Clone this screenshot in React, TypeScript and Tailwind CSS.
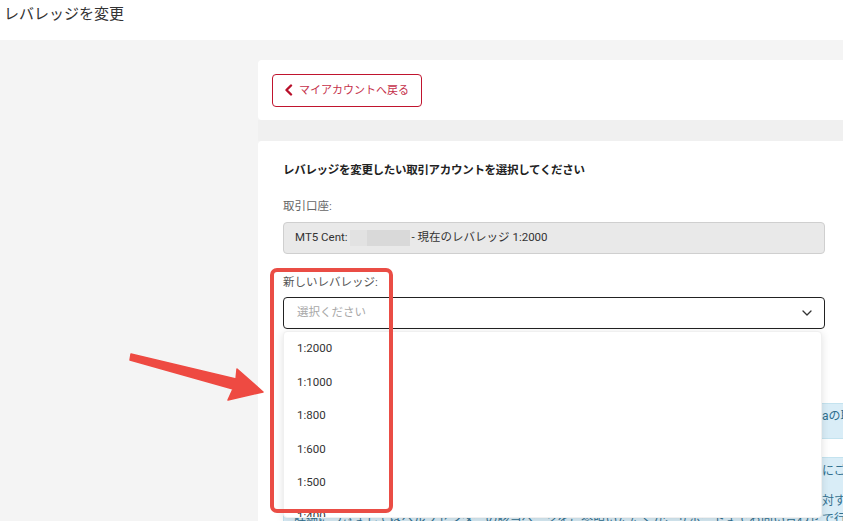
import React from "react";

const font = { fontFamily: "Roboto, 'Noto Sans CJK JP', sans-serif" };

export default function App() {
  const items = ["1:2000", "1:1000", "1:800", "1:600", "1:500", "1:400", "1:300"];
  return (
    <div
      className="relative w-[843px] h-[521px] overflow-hidden bg-[#f4f4f4] text-[#333]"
      style={font}
    >
      <header className="h-[40px] bg-white pl-[4px] pt-[4px] text-[15px] leading-[20px] text-[#333]">
        レバレッジを変更
      </header>

      <div className="flex pt-[20px]">
        <div className="w-[258px] shrink-0" />
        <div className="w-[620px] shrink-0">
          {/* Back card */}
          <div className="h-[60px] bg-white rounded-[4px] pl-[14px] flex items-center">
            <button className="h-[33px] w-[150px] border border-[#c0142e] rounded-[4px] flex items-center pl-[11px] gap-[6px] text-[#c5314b] text-[11px] leading-none">
              <svg width="9" height="12" viewBox="0 0 9 12" fill="none">
                <path d="M7 1.5L2.5 6L7 10.5" stroke="#b8102a" strokeWidth="2.4" strokeLinecap="round" strokeLinejoin="round" />
              </svg>
              <span>マイアカウントへ戻る</span>
            </button>
          </div>

          <div className="h-[21px] bg-[#f0f0f0]" />

          {/* Main card */}
          <div className="bg-white rounded-[4px] pl-[25px] pt-[20px] h-[420px]">
            <h2 className="text-[11.5px] leading-[18px] font-bold text-[#222] tracking-[-0.3px]">
              レバレッジを変更したい取引アカウントを選択してください
            </h2>
            <div className="mt-[18px] text-[11.5px] leading-[18px] text-[#666]">取引口座:</div>
            <div className="mt-[7px] w-[542px] h-[32px] bg-[#e9e9e9] border border-[#cfcfcf] rounded-[4px] flex items-center pl-[11px] text-[11.5px] text-[#333]">
              <span>MT5 Cent:</span>
              <span className="inline-block w-[17px] h-[16px] bg-[#e2e2e2] ml-[2px]" />
              <span className="inline-block w-[43px] h-[16px] bg-[#d9d9d9]" />
              <span className="ml-[2px]">- 現在のレバレッジ 1:2000</span>
            </div>

            <div className="mt-[19px] text-[11.5px] leading-[18px] text-[#555]">新しいレバレッジ:</div>
            <div className="relative mt-[6px] w-[542px]">
              <div className="h-[32px] border border-[#222] rounded-[4px] flex items-center justify-between pl-[13px] pr-[12px] text-[11.5px] text-[#a8a8a8]">
                <span>選択ください</span>
                <svg width="10" height="6" viewBox="0 0 10 6" fill="none">
                  <path d="M1 1L5 5L9 1" stroke="#333" strokeWidth="1.3" strokeLinecap="round" strokeLinejoin="round" />
                </svg>
              </div>

              {/* Info boxes underneath dropdown */}
              <div className="mt-[74px] w-[580px] h-[36px] bg-[#d9edf7] border border-[#c4e3ef] pl-[10px] pt-[3px] text-[12px] leading-[18px] text-[#31708f] whitespace-nowrap overflow-hidden">
                <span className="inline-block w-[528px] overflow-hidden align-top">
                  レバレッジの変更リクエストは通常数分以内に処理され、変更後のレバレッジはすぐに反映されます
                </span>
                <span>aの取引条件をご確認ください。</span>
              </div>
              <div className="mt-[18px] w-[580px] h-[80px] bg-[#d9edf7] border border-[#c4e3ef] pl-[10px] pt-[4px] text-[12px] leading-[18px] text-[#31708f] whitespace-nowrap overflow-hidden">
                <div>
                  <span className="inline-block w-[528px] overflow-hidden align-top">
                    保有中のポジションや未決済注文がある場合でもレバレッジを変更することができますので事前
                  </span>
                  <span>にご確認ください。</span>
                </div>
                <div className="mt-[12px]">
                  <span className="inline-block w-[528px] overflow-hidden align-top">
                    レバレッジの上限は口座の有効証拠金や取引する銘柄によって異なり、制限が適用される場合に
                  </span>
                  <span>対する条件</span>
                </div>
                <div>
                  <span className="inline-block w-[528px] overflow-hidden align-top">
                    詳細につきましてはヘルプセンターの該当ページをご参照いただくか、サポートまでお問い合わせく
                  </span>
                  <span>で行</span>
                </div>
              </div>

              {/* Dropdown menu */}
              <div className="absolute left-0 top-[34px] w-[539px] h-[187px] overflow-hidden bg-white rounded-[4px] shadow-[0_2px_8px_rgba(0,0,0,0.12)] border border-[#f0f0f0]">
                {items.map((it) => (
                  <div key={it} className="h-[33.5px] flex items-center pl-[13px] text-[11.5px] text-[#333]">
                    {it}
                  </div>
                ))}
              </div>
            </div>
          </div>
        </div>
      </div>

      {/* Annotation: red rectangle */}
      <div className="absolute left-[270px] top-[268px] w-[123px] h-[245px] border-[4px] border-[#ea4d45] rounded-[7px] pointer-events-none" />

      {/* Annotation: red arrow */}
      <svg className="absolute left-0 top-0 pointer-events-none" width="843" height="521" viewBox="0 0 843 521">
        <polygon
          points="131,354 236,379 237,369 263,392 228,400 233,389 130,360"
          fill="#ee4a42"
          stroke="#ee4a42"
          strokeWidth="1.5"
          strokeLinejoin="round"
        />
      </svg>
    </div>
  );
}
